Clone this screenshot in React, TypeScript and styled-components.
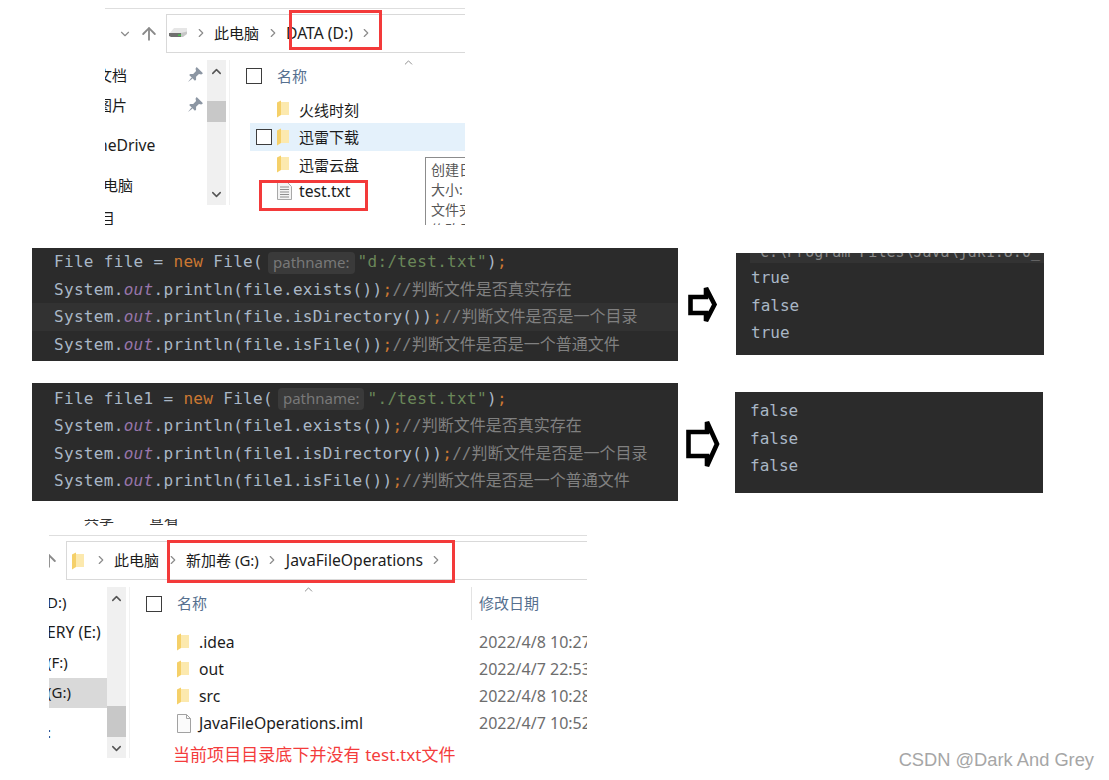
import React from "react";
import styled, { createGlobalStyle } from "styled-components";
import { ArrowUp, ChevronDown, ChevronRight, ChevronUp } from "lucide-react";

const uiFont = `"Noto Sans", "Noto Sans CJK SC", sans-serif`;
const codeFont = `"DejaVu Sans Mono", "Noto Sans CJK SC", monospace`;

const Global = createGlobalStyle`
  html, body { margin: 0; padding: 0; background: #fff; }
`;

const Canvas = styled.div`
  position: relative;
  width: 1109px;
  height: 780px;
  overflow: hidden;
  background: #fff;
  font-family: ${uiFont};
`;

/* explorer snippets */
const Shot = styled.section<{ $left: number; $width: number; $height: number; $top?: number }>`
  position: relative;
  margin: ${(p) => p.$top ?? 0}px 0 0 ${(p) => p.$left}px;
  width: ${(p) => p.$width}px;
  height: ${(p) => p.$height}px;
  overflow: hidden;
  font-size: 15px;
  color: #1c1c1c;
`;

const Lat = styled.span`
  font-size: 15.7px;
`;

const TabStrip = styled.div`
  display: flex;
  height: 7px;
  margin-top: 14px;
  overflow: hidden;
  padding-left: 35px;
  gap: 35px;
  font-size: 15px;
  line-height: 22px;
  color: #333;
  & > span { margin-top: -12px; }
`;

const Rule = styled.div<{ $top: number }>`
  height: 1px;
  margin-top: ${(p) => p.$top}px;
  background: #dedede;
`;

const NavRow = styled.div<{ $top: number }>`
  display: flex;
  height: 39px;
  margin-top: ${(p) => p.$top}px;
`;

const NavButtons = styled.div<{ $width: number; $pad: number }>`
  flex: 0 0 ${(p) => p.$width}px;
  min-width: 0;
  overflow: hidden;
  display: flex;
  align-items: center;
  justify-content: flex-end;
  gap: 7px;
  padding-right: ${(p) => p.$pad}px;
  box-sizing: border-box;
  color: #8a8a8a;
  & > svg { flex: none; }
`;

const Address = styled.div<{ $pad: number }>`
  flex: 1;
  display: flex;
  align-items: center;
  box-sizing: border-box;
  padding: 0 0 2px ${(p) => p.$pad}px;
  border: 1px solid #d9d9d9;
  border-width: 1px 0 1px 1px;
  white-space: nowrap;
`;

const AddrIcon = styled.span`
  display: flex;
  margin: 2px 3px 0 0;
`;

const Sep = styled.span`
  flex: 0 0 27px;
  display: flex;
  justify-content: center;
  color: #8c8c8c;
`;

const Body = styled.div<{ $top: number }>`
  display: flex;
  align-items: flex-start;
  margin-top: ${(p) => p.$top}px;
`;

const Sidebar = styled.div<{ $width: number }>`
  flex: 0 0 ${(p) => p.$width}px;
  overflow: hidden;
`;

const SideRow = styled.div<{ $gap?: number; $shift?: number; $active?: boolean }>`
  display: flex;
  align-items: center;
  justify-content: space-between;
  box-sizing: border-box;
  height: 30px;
  margin-top: ${(p) => p.$gap ?? 0}px;
  padding: 0 4px 2px 0;
  background: ${(p) => (p.$active ? "#d9d9d9" : "transparent")};
  white-space: nowrap;
  & > span { margin-left: ${(p) => p.$shift ?? 0}px; }
`;

const Track = styled.div<{ $width: number; $height: number }>`
  flex: 0 0 ${(p) => p.$width}px;
  height: ${(p) => p.$height}px;
  display: flex;
  flex-direction: column;
  background: #f0f0f0;
  color: #555;
`;

const TrackBtn = styled.div`
  display: flex;
  justify-content: center;
  align-items: center;
  height: 22px;
  flex: none;
`;

const Thumb = styled.div<{ $top: number; $height: number }>`
  margin-top: ${(p) => p.$top}px;
  height: ${(p) => p.$height}px;
  background: #c8c8c8;
  flex: none;
`;

const TrackEnd = styled(TrackBtn)`
  margin-top: auto;
`;

const Split = styled.div<{ $height: number }>`
  flex: 0 0 1px;
  height: ${(p) => p.$height}px;
  margin-left: 3px;
  background: #f1f1f1;
`;

const Files = styled.div`
  flex: 1;
  min-width: 0;
  position: relative;
`;

const HeaderRow = styled.div<{ $left: number; $height: number }>`
  display: flex;
  align-items: center;
  height: ${(p) => p.$height}px;
  padding-left: ${(p) => p.$left}px;
`;

const Check = styled.span`
  flex: none;
  display: block;
  box-sizing: border-box;
  width: 16px;
  height: 16px;
  border: 1px solid #3d3d3d;
  background: #fff;
`;

const ColName = styled.span`
  margin: -2px 0 0 15px;
  color: #56708f;
  font-size: 15px;
`;

const ColDate = styled.span`
  position: absolute;
  left: 341px;
  top: 0;
  height: 33px;
  padding: 0 0 2px 7px;
  box-sizing: border-box;
  display: flex;
  align-items: center;
  border-left: 1px solid #e3e3e3;
  color: #56708f;
  font-size: 15px;
`;

const SortCaret = styled.span<{ $left: number; $top: number }>`
  position: absolute;
  left: ${(p) => p.$left}px;
  top: ${(p) => p.$top}px;
  display: flex;
  color: #777;
`;

const FileList = styled.div<{ $top: number; $left: number }>`
  margin: ${(p) => p.$top}px 0 0 ${(p) => p.$left}px;
`;

const FileRow = styled.div<{ $hover?: boolean; $pad: number }>`
  display: flex;
  align-items: center;
  box-sizing: border-box;
  height: ${(p) => (p.$hover ? 28 : 27)}px;
  padding-left: ${(p) => p.$pad}px;
  padding-bottom: 1px;
  background: ${(p) => (p.$hover ? "#e4f1fb" : "transparent")};
  white-space: nowrap;
`;

const RowCheck = styled(Check)`
  margin-left: -21px;
  margin-right: 5px;
`;

const IconSlot = styled.span`
  flex: 0 0 22px;
  display: flex;
`;

const DateCell = styled.span`
  position: absolute;
  left: 349px;
  color: #6d6d6d;
  font-size: 16px;
`;

const Tip = styled.div`
  position: absolute;
  left: 195px;
  top: 97px;
  width: 90px;
  box-sizing: border-box;
  padding: 2px 0 0 5px;
  border: 1px solid #8c8c8c;
  background: #fff;
  color: #575757;
  font-size: 14px;
  line-height: 20px;
  white-space: nowrap;
`;

const Note = styled.div`
  margin: 7px 0 0 43px;
  color: #f43c3c;
  font-size: 17px;
  letter-spacing: 0.06px;
  line-height: 22px;
  white-space: nowrap;
`;

const RedBox = styled.div<{ $x: number; $y: number; $w: number; $h: number }>`
  position: absolute;
  left: ${(p) => p.$x}px;
  top: ${(p) => p.$y}px;
  width: ${(p) => p.$w}px;
  height: ${(p) => p.$h}px;
  box-sizing: border-box;
  border: 3px solid #f33a3a;
`;

/* code snippets */
const ShotRow = styled.div<{ $top: number }>`
  display: flex;
  align-items: flex-start;
  margin-top: ${(p) => p.$top}px;
  padding-left: 32px;
`;

const CodePanel = styled.div<{ $height: number; $pad: number }>`
  flex: 0 0 646px;
  box-sizing: border-box;
  height: ${(p) => p.$height}px;
  padding-top: ${(p) => p.$pad}px;
  background: #2b2b2b;
`;

const CodeLine = styled.div<{ $current?: boolean }>`
  height: 27.5px;
  line-height: 27.5px;
  padding-left: 22px;
  background: ${(p) => (p.$current ? "#323232" : "transparent")};
  font-family: ${codeFont};
  font-size: 16px;
  letter-spacing: 0.32px;
  color: #a9b7c6;
  white-space: nowrap;
`;

const Kw = styled.span`color: #cc7832;`;
const Str = styled.span`color: #6a8759;`;
const Field = styled.span`color: #9876aa; font-style: italic;`;
const Cm = styled.span`color: #808080; letter-spacing: 0;`;

const Hint = styled.span`
  display: inline-block;
  height: 22px;
  line-height: 20px;
  margin: 0 3px 0 5px;
  padding: 0 5px;
  border-radius: 4px;
  background: #3a3a3a;
  color: #787878;
  font-family: ${uiFont};
  font-size: 15px;
  letter-spacing: 0;
  vertical-align: middle;
`;

const ArrowWrap = styled.div<{ $left: number; $top: number }>`
  flex: none;
  display: flex;
  margin: ${(p) => p.$top}px 0 0 ${(p) => p.$left}px;
`;

const Console = styled.div<{ $left: number; $top: number; $height: number; $pad?: number }>`
  flex: 0 0 308px;
  box-sizing: border-box;
  height: ${(p) => p.$height}px;
  margin: ${(p) => p.$top}px 0 0 ${(p) => p.$left}px;
  padding-top: ${(p) => p.$pad ?? 0}px;
  background: #2b2b2b;
`;

const CmdStrip = styled.div`
  height: 10px;
  margin: 0 0 1px 14px;
  padding-left: 10px;
  overflow: hidden;
  background: #333;
  color: #8a8a8a;
  font-family: ${codeFont};
  font-size: 15px;
  line-height: 20px;
  white-space: nowrap;
  & > span { display: block; margin-top: -11px; }
`;

const Out = styled.div`
  height: 27.5px;
  line-height: 27.5px;
  padding-left: 15px;
  font-family: ${codeFont};
  font-size: 16px;
  color: #a9b7c6;
`;

const Watermark = styled.div`
  position: absolute;
  right: 15px;
  top: 749px;
  font-family: "Liberation Sans", "Noto Sans", sans-serif;
  font-size: 18.3px;
  line-height: 22px;
  color: #a6a6a6;
`;

/* drawings */
const FolderIcon = () => (
  <svg width="12" height="18" viewBox="0 0 12 18">
    <path d="M4 2 L12 2 L12 15 L4 15Z" fill="#fce9ae" />
    <path d="M0 2.500 L4 .5 L4 15 L0 17.500Z" fill="#f5d069" />
  </svg>
);

const TextFileIcon = () => (
  <svg width="15" height="18" viewBox="0 0 15 18">
    <path d="M.5.5H10.5L14.5 4.500V17.500H.5Z" fill="#f4f4f4" stroke="#a8a8a8" />
    <path d="M3 5H12M3 7.500H12M3 10H12M3 12.500H12M3 15H12" stroke="#8f8f8f" />
  </svg>
);

const PlainFileIcon = () => (
  <svg width="14" height="19" viewBox="0 0 14 19">
    <path d="M.5.500H9.500L13.500 4.500V18.500H.5Z" fill="#fbfbfb" stroke="#a2a2a2" />
    <path d="M9.500.500V4.500H13.500" fill="none" stroke="#a2a2a2" />
  </svg>
);

const DriveIcon = () => (
  <svg width="18" height="9" viewBox="0 0 18 9">
    <path d="M5 0H18V4L12 6H0Z" fill="#e6e6e6" />
    <path d="M0 5H12V9H2L0 8Z" fill="#6f6f6f" />
    <path d="M12 5L18 3.500V6L14 9H12Z" fill="#c6c6c6" />
    <rect x="9" y="6.500" width="3" height="1.500" fill="#45c04a" />
  </svg>
);

const PinIcon = () => (
  <svg width="15" height="15" viewBox="0 0 13 13">
    <path d="M7.500 0 L13 5.500 L11.500 6.500 L9.500 6 L7 8.500 L7 11 L6 12 L1 7 L2 6 L4.500 6 L7 3.500 L6.500 1.500Z" fill="#8c96a3" />
    <path d="M3 9 L0 13 L4 10Z" fill="#8c96a3" />
  </svg>
);

const HollowArrow = ({ width, height, points }: { width: number; height: number; points: string }) => (
  <svg width={width} height={height} viewBox={`0 0 ${width} ${height}`}>
    <polygon points={points} fill="#fff" stroke="#000" strokeWidth="4.600" strokeLinejoin="miter" />
  </svg>
);

const Crumb = () => (
  <Sep>
    <ChevronRight size={14} strokeWidth={2} />
  </Sep>
);

const Scroll = ({ height, top, thumb }: { height: number; top: number; thumb: number }) => (
  <Track $width={19} $height={height}>
    <TrackBtn>
      <ChevronUp size={15} strokeWidth={2.4} />
    </TrackBtn>
    <Thumb $top={top} $height={thumb} />
    <TrackEnd>
      <ChevronDown size={15} strokeWidth={2.4} />
    </TrackEnd>
  </Track>
);

function CodeBlock({ name, path, current }: { name: string; path: string; current?: boolean }) {
  const call = (method: string, comment: string, on?: boolean) => (
    <CodeLine $current={on}>
      System.<Field>out</Field>.println({name}.{method}())<Kw>;</Kw>
      <Cm>//{comment}</Cm>
    </CodeLine>
  );
  return (
    <>
      <CodeLine>
        File {name} = <Kw>new</Kw> File(
        <Hint>pathname:</Hint>
        <Str>"{path}"</Str>)<Kw>;</Kw>
      </CodeLine>
      {call("exists", "判断文件是否真实存在")}
      {call("isDirectory", "判断文件是否是一个目录", current)}
      {call("isFile", "判断文件是否是一个普通文件")}
    </>
  );
}

export default function App() {
  return (
    <Canvas>
      <Global />

      <Shot $left={105} $width={360} $height={225}>
        <Rule $top={8} />
        <NavRow $top={5}>
          <NavButtons $width={61} $pad={7}>
            <ChevronDown size={14} strokeWidth={2} />
            <ArrowUp size={20} strokeWidth={2.2} />
          </NavButtons>
          <Address $pad={2}>
            <DriveIcon />
            <Crumb />
            此电脑
            <Crumb />
            <Lat>DATA (D:)</Lat>
            <Crumb />
          </Address>
        </NavRow>
        <Body $top={7}>
          <Sidebar $width={102}>
            <SideRow $shift={-8}>
              <span>文档</span>
              <PinIcon />
            </SideRow>
            <SideRow $shift={-8}>
              <span>图片</span>
              <PinIcon />
            </SideRow>
            <SideRow $gap={11} $shift={-7}>
              <span>
                <Lat>neDrive</Lat>
              </span>
            </SideRow>
            <SideRow $gap={9} $shift={-2}>
              <span>电脑</span>
            </SideRow>
            <SideRow $gap={3} $shift={-5}>
              <span>目</span>
            </SideRow>
          </Sidebar>
          <Scroll height={145} top={19} thumb={21} />
          <Split $height={145} />
          <Files>
            <HeaderRow $left={16} $height={32}>
              <Check />
              <ColName>名称</ColName>
            </HeaderRow>
            <SortCaret $left={172} $top={-4}>
              <ChevronUp size={13} strokeWidth={1.5} />
            </SortCaret>
            <FileList $top={4} $left={20}>
              <FileRow $pad={27}>
                <IconSlot><FolderIcon /></IconSlot>
                火线时刻
              </FileRow>
              <FileRow $pad={27} $hover>
                <RowCheck />
                <IconSlot><FolderIcon /></IconSlot>
                迅雷下载
              </FileRow>
              <FileRow $pad={27}>
                <IconSlot><FolderIcon /></IconSlot>
                迅雷云盘
              </FileRow>
              <FileRow $pad={27}>
                <IconSlot><TextFileIcon /></IconSlot>
                <Lat>test.txt</Lat>
              </FileRow>
            </FileList>
            <Tip>
              创建日期:
              <br />
              大小:
              <br />
              文件夹:
              <br />
              修改日期:
            </Tip>
          </Files>
        </Body>
        <RedBox $x={184} $y={10} $w={93} $h={40} />
        <RedBox $x={154} $y={180} $w={109} $h={31} />
      </Shot>

      <ShotRow $top={23}>
        <CodePanel $height={113} $pad={0}>
          <CodeBlock name="file" path="d:/test.txt" current />
        </CodePanel>
        <ArrowWrap $left={10} $top={36}>
          <HollowArrow width={30} height={41} points="2.500,13 18,13 18,4 26.500,20.500 18,37 18,29 2.500,29" />
        </ArrowWrap>
        <Console $left={18} $top={5} $height={102}>
          <CmdStrip>
            <span>C:\Program Files\Java\jdk1.8.0_</span>
          </CmdStrip>
          <Out>true</Out>
          <Out>false</Out>
          <Out>true</Out>
        </Console>
      </ShotRow>

      <ShotRow $top={22}>
        <CodePanel $height={118} $pad={1.5}>
          <CodeBlock name="file1" path="./test.txt" />
        </CodePanel>
        <ArrowWrap $left={8} $top={34}>
          <HollowArrow width={34} height={54} points="2.500,15 21,15 21,5 31,27 21,49 21,39 2.500,39" />
        </ArrowWrap>
        <Console $left={15} $top={9} $height={101} $pad={5}>
          <Out>false</Out>
          <Out>false</Out>
          <Out>false</Out>
        </Console>
      </ShotRow>

      <Shot $left={49} $width={538} $height={271} $top={4}>
        <TabStrip>
          <span>共享</span>
          <span>查看</span>
        </TabStrip>
        <Rule $top={9} />
        <NavRow $top={5}>
          <NavButtons $width={17} $pad={7}>
            <ArrowUp size={20} strokeWidth={2.2} />
          </NavButtons>
          <Address $pad={5}>
            <AddrIcon><FolderIcon /></AddrIcon>
            <Crumb />
            此电脑
            <Crumb />
            新加卷 (G:)
            <Crumb />
            <Lat>JavaFileOperations</Lat>
            <Crumb />
          </Address>
        </NavRow>
        <Body $top={7}>
          <Sidebar $width={58}>
            <SideRow $shift={-2} $gap={1}>
              <span>D:)</span>
            </SideRow>
            <SideRow $shift={-2}>
              <span>
                <Lat>ERY (E:)</Lat>
              </span>
            </SideRow>
            <SideRow $shift={-2}>
              <span>(F:)</span>
            </SideRow>
            <SideRow $shift={-2} $active>
              <span>(G:)</span>
            </SideRow>
            <SideRow $gap={10} $shift={-2}>
              <span>:</span>
            </SideRow>
          </Sidebar>
          <Scroll height={171} top={97} thumb={31} />
          <Split $height={171} />
          <Files>
            <HeaderRow $left={16} $height={33}>
              <Check />
              <ColName>名称</ColName>
              <ColDate>修改日期</ColDate>
            </HeaderRow>
            <SortCaret $left={172} $top={-4}>
              <ChevronUp size={13} strokeWidth={1.5} />
            </SortCaret>
            <FileList $top={9} $left={0}>
              <FileRow $pad={47}>
                <IconSlot><FolderIcon /></IconSlot>
                <Lat>.idea</Lat>
                <DateCell>2022/4/8 10:27</DateCell>
              </FileRow>
              <FileRow $pad={47}>
                <IconSlot><FolderIcon /></IconSlot>
                <Lat>out</Lat>
                <DateCell>2022/4/7 22:53</DateCell>
              </FileRow>
              <FileRow $pad={47}>
                <IconSlot><FolderIcon /></IconSlot>
                <Lat>src</Lat>
                <DateCell>2022/4/8 10:28</DateCell>
              </FileRow>
              <FileRow $pad={47}>
                <IconSlot><PlainFileIcon /></IconSlot>
                <Lat>JavaFileOperations.iml</Lat>
                <DateCell>2022/4/7 10:52</DateCell>
              </FileRow>
            </FileList>
            <Note>当前项目目录底下并没有 test.txt文件</Note>
          </Files>
        </Body>
        <RedBox $x={118} $y={35} $w={288} $h={43} />
      </Shot>

      <Watermark>CSDN @Dark And Grey</Watermark>
    </Canvas>
  );
}
